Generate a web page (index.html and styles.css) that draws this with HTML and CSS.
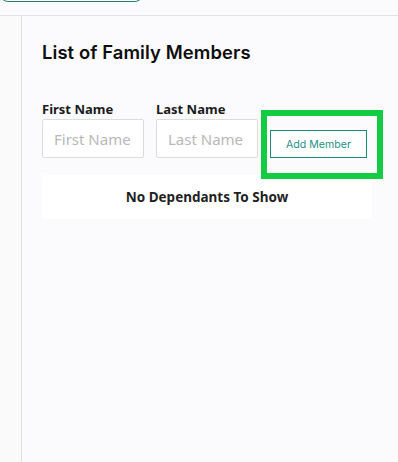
FILE: index.html
```html
<!DOCTYPE html>
<html lang="en">
<head>
  <meta charset="UTF-8">
  <meta name="viewport" content="width=device-width, initial-scale=1">
  <title>Family Members</title>

  <link rel="stylesheet" href="styles.css">
</head>
<body>
<div class="Header">
  <div class="Header__Search"></div>
</div>
<div class="Layout">
  <div class="Sidebar"></div>
  <div class="Main">
    <div class="Main__Title">List of Family Members</div>

    <div class="MemberForm">
      <div class="MemberForm__Field">
        <label class="MemberForm__Label" for="first-name">First Name</label>
        <input class="MemberForm__Input" id="first-name" type="text" placeholder="First Name">
      </div>
      <div class="MemberForm__Field">
        <label class="MemberForm__Label" for="last-name">Last Name</label>
        <input class="MemberForm__Input" id="last-name" type="text" placeholder="Last Name">
      </div>
      <div class="MemberForm__Action">
        <!-- highlight drawn over the button -->
        <span class="MemberForm__Highlight"></span>
        <button class="MemberForm__Button" type="button">Add Member</button>
      </div>
    </div>

    <div class="EmptyState">No Dependants To Show</div>
  </div>
</div>
</body>
</html>
```

FILE: styles.css
```css
html, body {
  padding: 0;
  margin: 0;
  height: 100%;
  background-color: #fbfbfe;
  font-family: "Noto Sans", "Open Sans", Arial, sans-serif;
}

body {
  display: flex;
  flex-direction: column;
  overflow: hidden;
}

.Header {
  height: 15px;
  border-bottom: 1px solid #e3e3e6;
  flex-shrink: 0;
}

.Header__Search {
  width: 143px;
  height: 22px;
  margin-top: -20px;
  box-sizing: border-box;
  border: 1.5px solid #24806a;
  border-radius: 8px;
}

.Layout {
  display: flex;
  flex: 1;
}

.Sidebar {
  width: 21px;
  background-color: #fafafb;
  border-right: 1px solid #e0e0e3;
}

.Main {
  flex: 1;
  padding: 24px 26px 0 20px;
}

.Main__Title {
  font-family: Inter, "Noto Sans", sans-serif;
  font-weight: 600;
  font-size: 18.4px;
  line-height: 24px;
  color: #0d0d0d;
  letter-spacing: 0.1px;
}

.MemberForm {
  display: flex;
  align-items: flex-end;
  margin-top: 36px;
}

.MemberForm__Field {
  display: flex;
  flex-direction: column;
  margin-right: 12px;
}

.MemberForm__Label {
  font-weight: 700;
  font-size: 13px;
  line-height: 18px;
  color: #1a1a1a;
  margin-bottom: 1px;
}

.MemberForm__Input {
  width: 102px;
  height: 39px;
  box-sizing: border-box;
  padding: 0 11px;
  border: 1px solid #dcdcdc;
  border-radius: 2px;
  background-color: #ffffff;
  font-family: "Noto Sans", Arial, sans-serif;
  font-size: 15px;
  color: #333333;
}

.MemberForm__Input::placeholder {
  color: #b8b8b8;
}

.MemberForm__Action {
  position: relative;
  display: flex;
}

.MemberForm__Button {
  width: 97px;
  height: 28px;
  box-sizing: border-box;
  border: 1.5px solid #168a72;
  background-color: #ffffff;
  color: #1f8f8a;
  font-family: Inter, "Noto Sans", sans-serif;
  font-size: 10.6px;
  padding: 0;
  cursor: pointer;
}

.MemberForm__Highlight {
  position: absolute;
  left: -9px;
  top: -20px;
  width: 122px;
  height: 69px;
  box-sizing: border-box;
  border: 6px solid #12cc44;
  pointer-events: none;
}

.EmptyState {
  margin-top: 17px;
  width: 330px;
  height: 44px;
  background-color: #ffffff;
  border-radius: 3px;
  display: flex;
  align-items: center;
  justify-content: center;
  font-weight: 700;
  font-size: 13.5px;
  color: #1f1f1f;
}
```
